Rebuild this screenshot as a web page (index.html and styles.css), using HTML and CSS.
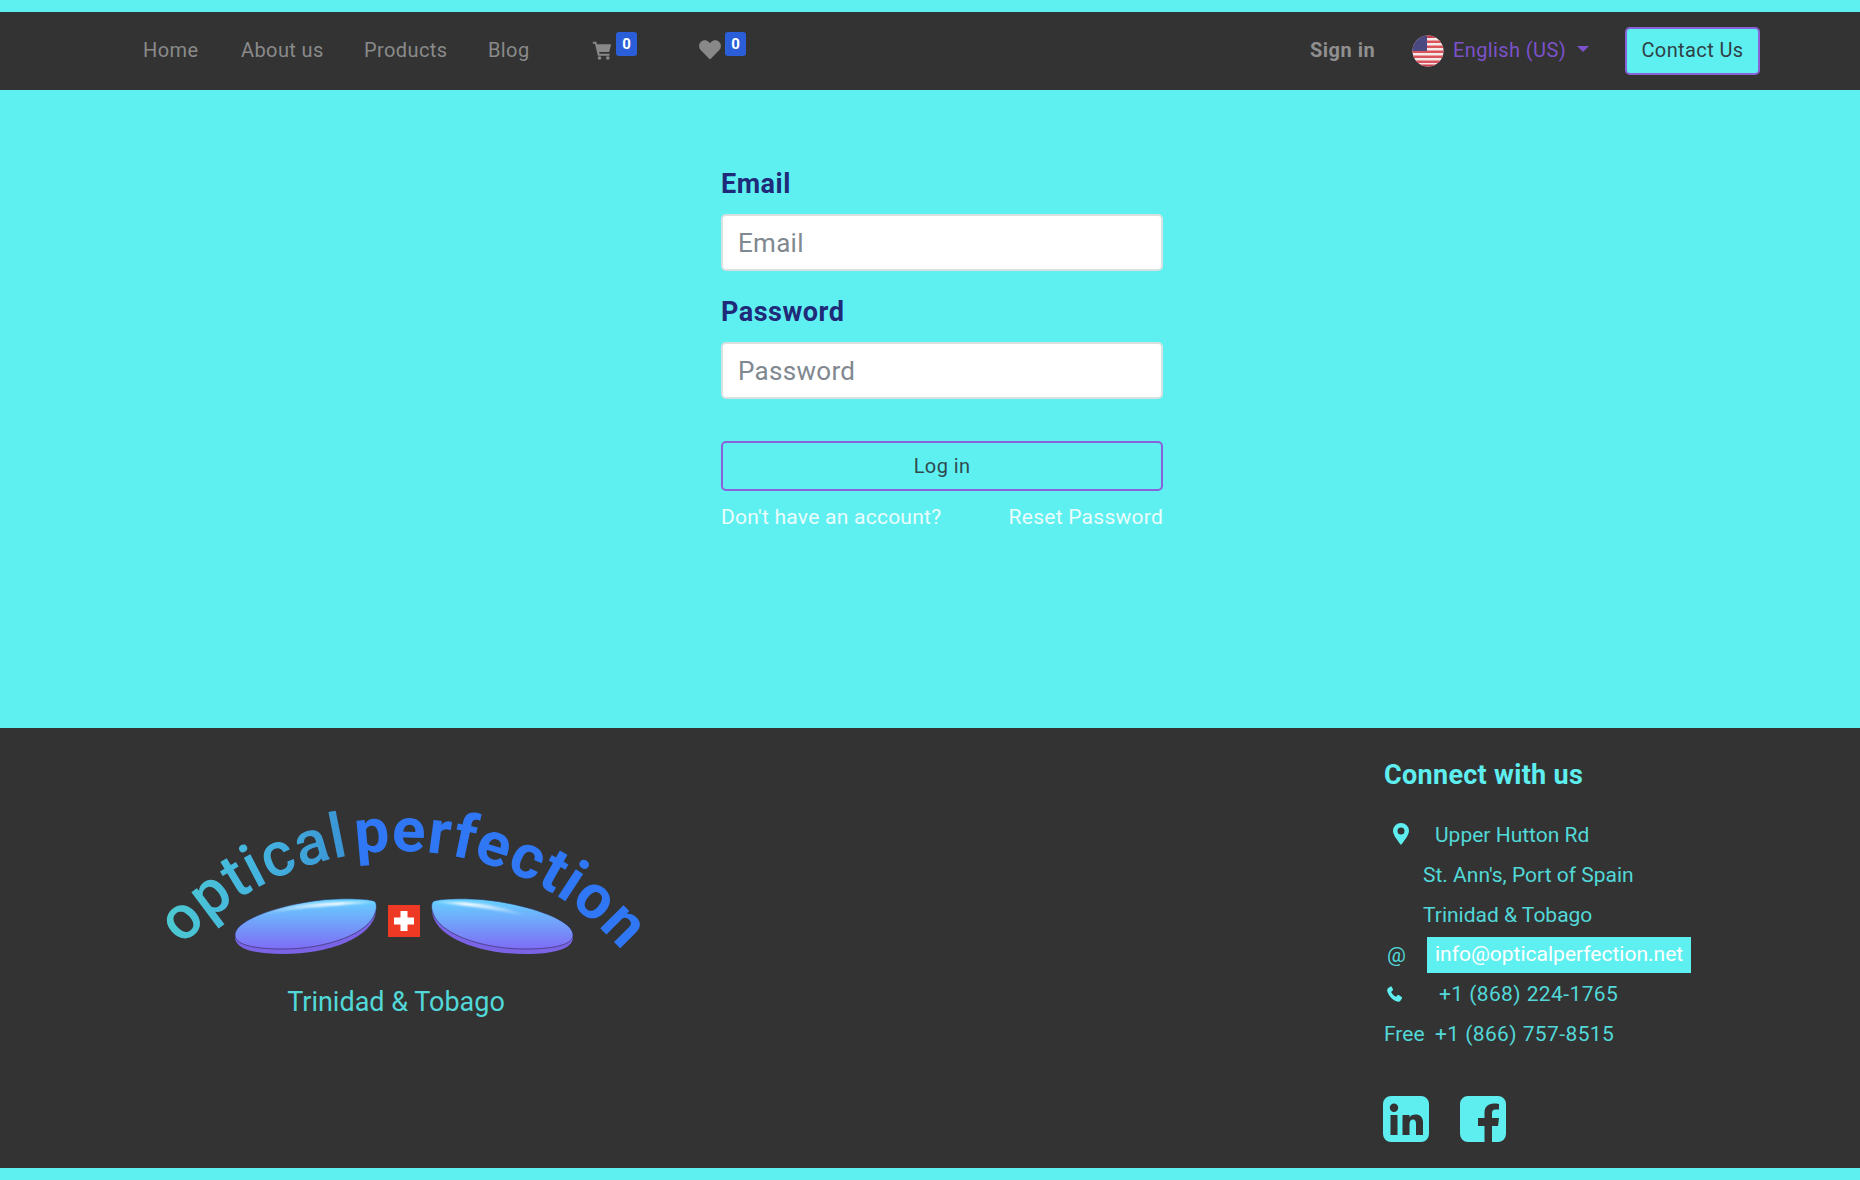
FILE: index.html
```html
<!DOCTYPE html>
<html lang="en">
<head>
<meta charset="utf-8">
<title>Sign in - Optical Perfection</title>
<link rel="stylesheet" href="styles.css">
</head>
<body>
<header class="navbar">
  <nav class="nav-links">
    <a class="nav-link link-home">Home</a>
    <a class="nav-link link-about">About us</a>
    <a class="nav-link link-products">Products</a>
    <a class="nav-link link-blog">Blog</a>
    <a class="nav-icon icon-cart">
      <svg class="glyph-cart" viewBox="0 0 24 24"><path fill="#888" d="M1 2h4.200l.8 3h17l-2.400 9.500H8.600l.4 2h12v2.400H7L3.600 4.400H1z"/><circle cx="9" cy="21.600" r="2.200" fill="#888"/><circle cx="19" cy="21.600" r="2.200" fill="#888"/></svg>
      <span class="badge">0</span>
    </a>
    <a class="nav-icon icon-heart">
      <svg class="glyph-heart" viewBox="0 0 24 22"><path fill="#888" d="M12 21.500 2.200 11.600C-.6 8.700-.6 4.500 1.800 2.100 4.300-.4 8.400-.2 10.800 2.300L12 3.600l1.200-1.300C15.600-.2 19.700-.4 22.200 2.100c2.400 2.400 2.400 6.600-.4 9.500z"/></svg>
      <span class="badge">0</span>
    </a>
  </nav>
  <div class="nav-right">
    <a class="sign-in">Sign in</a>
    <a class="lang">
      <svg class="flag" viewBox="0 0 32 32">
        <defs><clipPath id="flagclip"><circle cx="16" cy="16" r="15.500"/></clipPath></defs>
        <g clip-path="url(#flagclip)">
          <rect width="32" height="32" fill="#f4e9e9"/>
          <rect y="0" width="32" height="3" fill="#c9404c"/>
          <rect y="5.500" width="32" height="2.500" fill="#d9525c"/>
          <rect y="10.500" width="32" height="2.500" fill="#d9525c"/>
          <rect y="15.500" width="32" height="2.500" fill="#d9525c"/>
          <rect y="20.500" width="32" height="2.500" fill="#d9525c"/>
          <rect y="25.500" width="32" height="2.500" fill="#d9525c"/>
          <rect y="29.500" width="32" height="3" fill="#c9404c"/>
          <rect width="15" height="16" fill="#4a4a80"/>
        </g>
      </svg>
      <span class="lang-text">English (US)</span>
      <span class="caret"></span>
    </a>
    <a class="contact-btn">Contact Us</a>
  </div>
</header>

<main class="content">
  <form class="login">
    <label class="field-label" for="email">Email</label>
    <input class="field-input" id="email" type="text" placeholder="Email">
    <label class="field-label label-password" for="password">Password</label>
    <input class="field-input" id="password" type="password" placeholder="Password">
    <button class="login-btn" type="button">Log in</button>
    <div class="login-links">
      <a>Don't have an account?</a>
      <a>Reset Password</a>
    </div>
  </form>
</main>

<footer class="footer">
  <div class="brand">
    <svg class="logo" viewBox="140 780 540 205">
      <defs>
        <linearGradient id="optgrad" gradientUnits="userSpaceOnUse" x1="170" y1="0" x2="345" y2="0">
          <stop offset="0" stop-color="#4cc8d2"/>
          <stop offset=".5" stop-color="#44b4e0"/>
          <stop offset="1" stop-color="#3a94d4"/>
        </linearGradient>
        <linearGradient id="lensgrad" x1="0" y1="0" x2="0" y2="1">
          <stop offset="0" stop-color="#66d2ff"/>
          <stop offset="1" stop-color="#7f6cf5"/>
        </linearGradient>
        <linearGradient id="shine" x1="0" y1="0" x2="1" y2="0">
          <stop offset="0" stop-color="#ffffff" stop-opacity="0"/>
          <stop offset=".7" stop-color="#ffffff"/>
          <stop offset="1" stop-color="#ffffff" stop-opacity=".3"/>
        </linearGradient>
        <linearGradient id="shine2" x1="0" y1="0" x2="1" y2="0">
          <stop offset="0" stop-color="#ffffff" stop-opacity=".3"/>
          <stop offset=".3" stop-color="#ffffff"/>
          <stop offset="1" stop-color="#ffffff" stop-opacity="0"/>
        </linearGradient>
        <filter id="soft"><feGaussianBlur stdDeviation=".9"/></filter>
        <path id="arc" d="M 137.800 1008.600 A 297 297 0 0 1 662.200 1008.600"/>
      </defs>
      <text class="logo-text"><textPath href="#arc" startOffset="77" class="logo-optical">optical</textPath></text>
      <text class="logo-text"><textPath href="#arc" startOffset="277" class="logo-perfection">perfection</textPath></text>

      <path fill="#7b63e6" d="M235 938c1 10 16 16 48 16 47 0 91-17 93-43l0-6-141 30z"/>
      <path fill="url(#lensgrad)" d="M235 935c0-18 62-35 102-36 14-.5 31 0 37 2 3 1 3 8 1 12-6 20-47 36-92 36-32 0-48-5-48-14z" stroke="#2c2a50" stroke-width=".6"/>
      <path class="logo-shine" fill="url(#shine)" d="M258 916c24-11 66-15 116-14-34 4-82 5-116 14z"/>

      <path fill="#7b63e6" d="M573 938c-1 10-16 16-48 16-47 0-91-17-93-43l0-6 141 30z"/>
      <path fill="url(#lensgrad)" d="M573 935c0-18-62-35-102-36-14-.5-31 0-37 2-3 1-3 8-1 12 6 20 47 36 92 36 32 0 48-5 48-14z" stroke="#2c2a50" stroke-width=".6"/>
      <path class="logo-shine" fill="url(#shine2)" d="M436 902c33-1 66 3 94 15-28-7-60-11-94-15z"/>

      <rect x="388" y="905" width="32" height="32" fill="#ee3a24"/>
      <path fill="#ffffff" d="M400.500 911h7v6.500h6.500v7h-6.500v6.500h-7v-6.500H394v-7h6.500z"/>
    </svg>
    <p class="brand-place">Trinidad &amp; Tobago</p>
  </div>

  <div class="connect">
    <h2 class="connect-title">Connect with us</h2>
    <div class="contact-row row-pin">
      <svg class="pin" viewBox="0 0 16 22"><path fill="#5eeef0" fill-rule="evenodd" d="M8 0a8 8 0 0 1 8 8c0 4-5 10-8 14C5 18 0 12 0 8a8 8 0 0 1 8-8zm0 4.500a3.500 3.500 0 1 0 0 7 3.500 3.500 0 0 0 0-7z"/></svg>
      <span>Upper Hutton Rd</span>
    </div>
    <div class="contact-row row-indent">St. Ann's, Port of Spain</div>
    <div class="contact-row row-indent">Trinidad &amp; Tobago</div>
    <div class="contact-row row-mail">
      <span class="at">@</span>
      <a class="mail">info@opticalperfection.net</a>
    </div>
    <div class="contact-row row-phone">
      <svg class="phone" viewBox="0 0 16 16"><path fill="#5eeef0" d="M3.600.6 1.200 2C.2 2.700 0 4 .3 5.300c1.500 5 5.300 8.800 10 10.300 1.400.4 2.600.1 3.300-1l1.400-2.300c.3-.5.100-1-.3-1.300l-3-1.900c-.5-.3-1-.2-1.300.2l-1 1.200c-.3.300-.6.300-1 .1-1.700-1-3-2.300-4-4-.2-.4-.2-.7.100-1l1.200-1c.4-.3.500-.8.200-1.300L4.900.9C4.600.4 4.100.3 3.600.6z"/></svg>
      <span class="digits">+1 (868) 224-1765</span>
    </div>
    <div class="contact-row row-free"><span class="free">Free</span><span class="digits">+1 (866) 757-8515</span></div>
    <div class="socials">
      <a class="social">
        <svg viewBox="0 0 46 46"><path fill="#5eeef0" fill-rule="evenodd" d="M8 0h30a8 8 0 0 1 8 8v30a8 8 0 0 1-8 8H8a8 8 0 0 1-8-8V8a8 8 0 0 1 8-8zm3 7.500a4.200 4.200 0 1 0 0 8.400 4.200 4.200 0 0 0 0-8.400zM7.500 19v20h7V19zm12 0v20h7V28c0-3 1.300-4.500 3.500-4.500S33 25 33 28v11h7V26.500c0-5.500-3-8-7.500-8-3 0-5 1.300-6 3V19z"/></svg>
      </a>
      <a class="social">
        <svg viewBox="0 0 46 46"><path fill="#5eeef0" fill-rule="evenodd" d="M8 0h30a8 8 0 0 1 8 8v30a8 8 0 0 1-8 8H32V30h6l1-8h-7v-5c0-2 1-3.500 3.500-3.500H39V8c-2-.5-3-.5-5-.5-6 0-9.500 3.500-9.500 9v5.500H18v8h6.500v16H8a8 8 0 0 1-8-8V8a8 8 0 0 1 8-8z"/></svg>
      </a>
    </div>
  </div>
</footer>
</body>
</html>
```

FILE: styles.css
```css
* { box-sizing: border-box; }

html, body { height: 100%; }

body {
  margin: 0;
  padding: 12px 0;
  background: #5ef0f0;
  font-family: Roboto, "Liberation Sans", sans-serif;
  font-size: 20px;
}

a { text-decoration: none; color: inherit; }

/* Navbar */
.navbar {
  height: 78px;
  background: #333333;
  display: flex;
  align-items: center;
  justify-content: space-between;
  padding: 0 100px 0 143px;
}

.nav-links { display: flex; align-items: center; }

.nav-link {
  color: #8a8a8a;
  font-size: 20px;
  letter-spacing: .4px;
  font-weight: 400;
  padding-bottom: 2px;
}

.link-home { width: 98px; }
.link-about { width: 123px; }
.link-products { width: 124px; }
.link-blog { width: 104px; }

.nav-icon {
  display: flex;
  align-items: flex-start;
  height: 40px;
}
.icon-cart { width: 107px; }

.glyph-cart { width: 20px; height: 20px; margin-top: 9px; }
.glyph-heart { width: 22px; height: 20px; margin-top: 9px; }

.badge {
  background: #2b5fd9;
  color: #fff;
  font-size: 15px;
  font-weight: 700;
  width: 21px;
  height: 24px;
  line-height: 24px;
  margin: 1px 0 0 4px;
  text-align: center;
  border-radius: 3px;
}

.nav-right { display: flex; align-items: center; }

.sign-in {
  color: #8f8f8f;
  font-size: 20px;
  font-weight: 700;
  letter-spacing: .5px;
  width: 102px;
  padding-bottom: 2px;
}

.lang { display: flex; align-items: center; width: 213px; }

.flag { width: 32px; height: 32px; margin-right: 9px; }

.lang-text {
  color: #7b52c9;
  font-size: 20px;
  letter-spacing: .4px;
  padding-bottom: 2px;
}

.caret {
  width: 0;
  height: 0;
  margin: -5px 0 0 11px;
  border-left: 6px solid transparent;
  border-right: 6px solid transparent;
  border-top: 6px solid #7b52c9;
}

.contact-btn {
  width: 135px;
  height: 48px;
  border: 2px solid #8a62d8;
  border-radius: 5px;
  background: #5ef0f0;
  color: #2f3f46;
  font-size: 20px;
  letter-spacing: .4px;
  display: flex;
  align-items: center;
  justify-content: center;
  padding-bottom: 2px;
}

/* Login */
.content {
  height: 638px;
  display: flex;
  justify-content: center;
}

.login {
  width: 442px;
  padding-top: 77px;
  margin-left: 24px;
  display: flex;
  flex-direction: column;
}

.field-label {
  color: #1f2a78;
  font-size: 27px;
  font-weight: 700;
  letter-spacing: .5px;
  line-height: 34px;
  margin-bottom: 13px;
}
.label-password { margin-top: 24px; }

.field-input {
  height: 57px;
  border: 2px solid #d8e0e0;
  border-radius: 5px;
  background: #fff;
  padding: 0 15px;
  font-family: inherit;
  font-size: 26px;
  letter-spacing: .3px;
  color: #333;
  outline: none;
}
.field-input::placeholder { color: #808890; opacity: 1; }

.login-btn {
  height: 50px;
  margin-top: 42px;
  border: 2px solid #8a62d8;
  border-radius: 5px;
  background: transparent;
  color: #2f4a50;
  font-family: inherit;
  font-size: 20px;
  letter-spacing: .4px;
}

.login-links {
  display: flex;
  justify-content: space-between;
  margin-top: 13px;
  color: #eafcfc;
  font-size: 21px;
  letter-spacing: .25px;
  line-height: 26px;
}

/* Footer */
.footer {
  height: 440px;
  background: #333333;
  display: flex;
}

.brand {
  width: 1384px;
  padding: 52px 0 0 140px;
  flex: none;
}

.logo { display: block; width: 540px; height: 205px; }

.logo-text {
  font-family: Roboto, "Liberation Sans", sans-serif;
  font-size: 62px;
}
.logo-optical { fill: url(#optgrad); font-weight: 500; letter-spacing: .8px; }
.logo-perfection { fill: #2f77f5; font-weight: 700; letter-spacing: 1px; }
.logo-shine { filter: url(#soft); }

.brand-place {
  margin: 0;
  width: 512px;
  text-align: center;
  color: #52d8d8;
  font-size: 27px;
  line-height: 34px;
}

.connect { color: #52d8d8; padding-top: 26px; font-size: 21px; }

.connect-title {
  margin: 0 0 19px;
  color: #5eeef0;
  font-size: 27px;
  font-weight: 700;
  letter-spacing: .3px;
  line-height: 42px;
}

.contact-row {
  display: flex;
  align-items: center;
  height: 40px;
}

.row-pin { padding-left: 9px; }
.pin { width: 16px; height: 22px; margin-right: 26px; margin-top: -3px; }
.row-indent { padding-left: 39px; }

.row-mail { padding-left: 3px; }
.at { width: 40px; }
.mail {
  background: #5ef0f0;
  color: #fff;
  height: 36px;
  line-height: 34px;
  padding: 0 8px;
}

.row-phone { padding-left: 3px; }
.phone { width: 16px; height: 16px; margin-right: 36px; margin-top: -2px; }

.digits { letter-spacing: .4px; padding-bottom: 2px; }
.free { width: 51px; padding-bottom: 2px; }

.socials { display: flex; gap: 31px; margin: 41px 0 0 -1px; }
.social { display: block; width: 46px; height: 46px; }
.social svg { display: block; width: 46px; height: 46px; }
```
